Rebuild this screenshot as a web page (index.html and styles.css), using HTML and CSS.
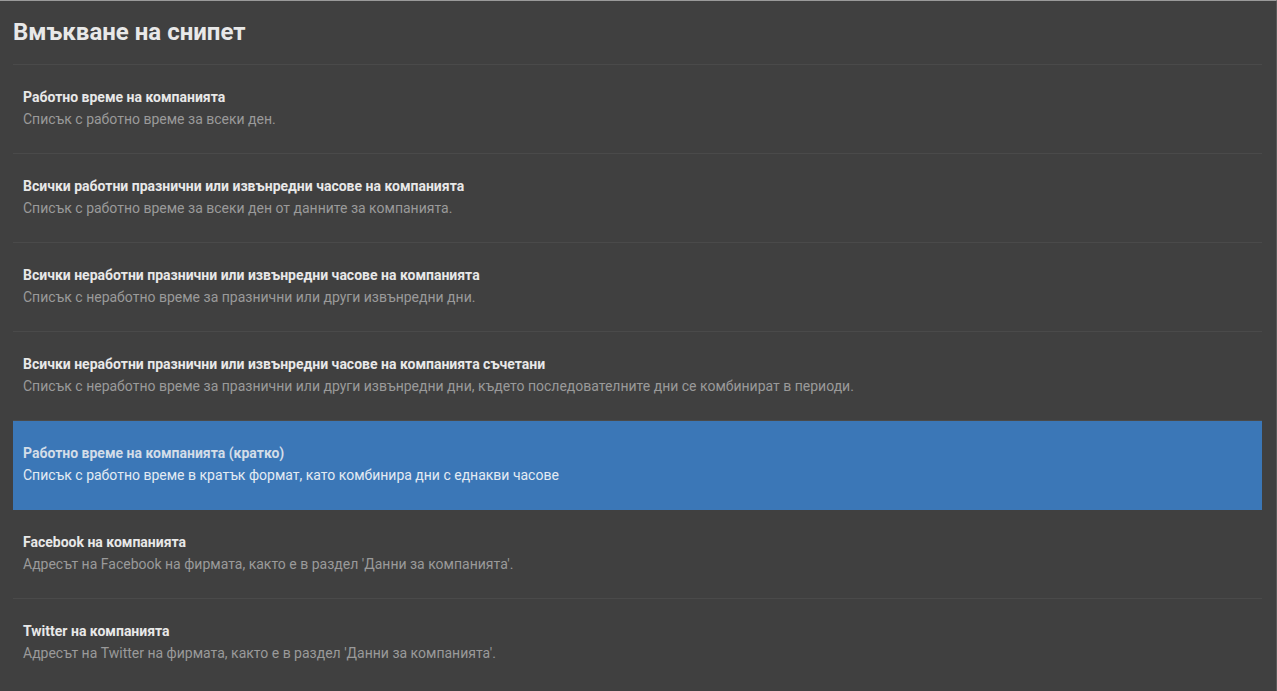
FILE: index.html
```html
<!DOCTYPE html>
<html lang="bg">
<head>
<meta charset="utf-8">
<title>Вмъкване на снипет</title>
<link rel="stylesheet" href="styles.css">
</head>
<body>
<div class="dialog">
  <h1 class="heading">Вмъкване на снипет</h1>
  <ul class="list">
    <li class="item">
      <div class="item-title">Работно време на компанията</div>
      <div class="item-desc">Списък с работно време за всеки ден.</div>
    </li>
    <li class="item">
      <div class="item-title">Всички работни празнични или извънредни часове на компанията</div>
      <div class="item-desc">Списък с работно време за всеки ден от данните за компанията.</div>
    </li>
    <li class="item">
      <div class="item-title">Всички неработни празнични или извънредни часове на компанията</div>
      <div class="item-desc">Списък с неработно време за празнични или други извънредни дни.</div>
    </li>
    <li class="item">
      <div class="item-title">Всички неработни празнични или извънредни часове на компанията съчетани</div>
      <div class="item-desc">Списък с неработно време за празнични или други извънредни дни, където последователните дни се комбинират в периоди.</div>
    </li>
    <li class="item selected">
      <div class="item-title">Работно време на компанията (кратко)</div>
      <div class="item-desc">Списък с работно време в кратък формат, като комбинира дни с еднакви часове</div>
    </li>
    <li class="item after-selected">
      <div class="item-title">Facebook на компанията</div>
      <div class="item-desc">Адресът на Facebook на фирмата, както е в раздел 'Данни за компанията'.</div>
    </li>
    <li class="item">
      <div class="item-title">Twitter на компанията</div>
      <div class="item-desc">Адресът на Twitter на фирмата, както е в раздел 'Данни за компанията'.</div>
    </li>
  </ul>
</div>
</body>
</html>
```
FILE: styles.css
```css
html, body {
  margin: 0;
  padding: 0;
  height: 100%;
  background: #404040;
  overflow: hidden;
}
body {
  font-family: Roboto, "Liberation Sans", Arial, sans-serif;
  border-top: 1px solid #9a9a9a;
  border-right: 1px solid #5a5a5a;
  box-sizing: border-box;
}
.dialog {
  padding: 0 14px 0 13px;
}
.heading {
  margin: 0;
  height: 63px;
  padding-bottom: 1px;
  box-sizing: border-box;
  display: flex;
  align-items: center;
  font-size: 24px;
  font-weight: 700;
  color: #e8e8e8;
  letter-spacing: 0;
}
.list {
  list-style: none;
  margin: 0;
  padding: 0;
}
.item {
  border-top: 1px solid #4a4a4a;
  height: 89px;
  padding: 22px 10px 0;
  box-sizing: border-box;
}
.item-title {
  font-size: 14px;
  font-weight: 700;
  color: #e8e8e8;
  line-height: 21px;
}
.item-desc {
  font-size: 14px;
  color: #9a9a9a;
  line-height: 22px;
}
.item.selected {
  background: #3b77b7;
}
.item.after-selected {
  border-top-color: #3b77b7;
}
.item.selected .item-title {
  color: #d3dde8;
}
.item.selected .item-desc {
  color: #e3ebf3;
}
```
